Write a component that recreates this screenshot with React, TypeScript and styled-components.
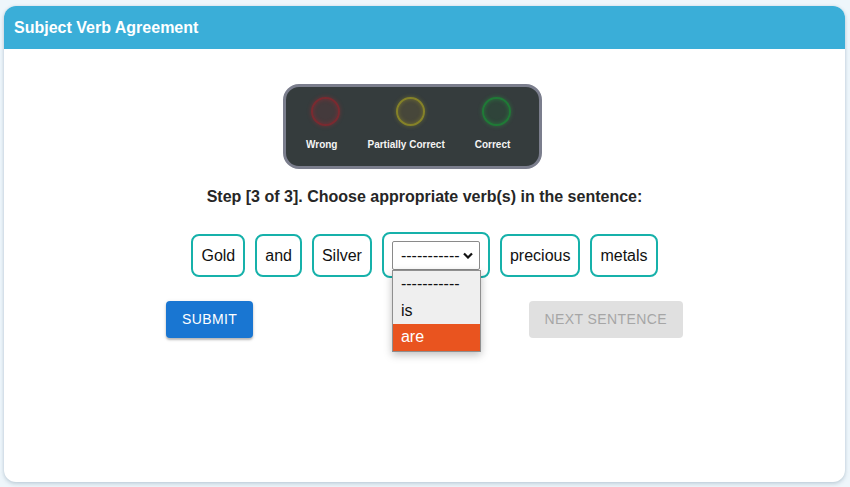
import React from "react";
import styled, { createGlobalStyle } from "styled-components";

const Global = createGlobalStyle`
  html, body { margin: 0; padding: 0; }
  body {
    background: #eef6fb;
    font-family: "Liberation Sans", Arial, sans-serif;
    width: 850px;
    height: 487px;
    overflow: hidden;
  }
  * { box-sizing: border-box; }
`;

const Page = styled.div`
  padding: 6px 5px 5px 4px;
  height: 487px;
`;

const Card = styled.div`
  background: #ffffff;
  border-radius: 12px;
  height: 476px;
  overflow: hidden;
  box-shadow: 0 2px 4px rgba(90, 120, 140, 0.28), 0 0 3px rgba(120, 150, 170, 0.18);
  display: flex;
  flex-direction: column;
`;

const Header = styled.div`
  height: 43px;
  background: #3aaed8;
  color: #fff;
  font-weight: 700;
  font-size: 16px;
  display: flex;
  align-items: center;
  padding-left: 10px;
`;

const Body = styled.div`
  display: flex;
  flex-direction: column;
  align-items: center;
`;

const Panel = styled.div`
  margin-top: 35px;
  margin-right: 24px;
  width: 259px;
  height: 85px;
  background: #353c3d;
  border: 3px solid #7b7e8d;
  border-radius: 16px;
  display: flex;
  gap: 30px;
  padding: 10px 0 0 20px;
`;

const Light = styled.div`
  display: flex;
  flex-direction: column;
  align-items: center;
`;

const Bulb = styled.div<{ $ring: string; $fill: string; $glow: string }>`
  width: 29px;
  height: 29px;
  border-radius: 50%;
  margin: 0 -4px 0 4px;
  border: 2px solid ${(p) => p.$ring};
  background: ${(p) => p.$fill};
  box-shadow: 0 0 4px ${(p) => p.$glow}, inset 0 0 4px ${(p) => p.$glow};
`;

const LightLabel = styled.div`
  margin-top: 13px;
  color: #f4f4f4;
  font-size: 10px;
  font-weight: 700;
  white-space: nowrap;
`;

const StepText = styled.div`
  margin-top: 18px;
  font-size: 16px;
  line-height: 20px;
  font-weight: 700;
  color: #262626;
`;

const WordRow = styled.div`
  margin-top: 25px;
  display: flex;
  align-items: center;
  gap: 10px;
`;

const Word = styled.div`
  border: 2px solid #16b1aa;
  border-radius: 8px;
  padding: 10px 8px;
  font-size: 16px;
  line-height: 19px;
  color: #111;
`;

const SelectWrap = styled.div`
  position: relative;
  border: 2px solid #16b1aa;
  border-radius: 8px;
  padding: 7px 8px 6px;
`;

const SelectBox = styled.div`
  width: 88px;
  height: 29px;
  border: 1px solid #8a8a8a;
  border-radius: 2px;
  background: #fff;
  display: flex;
  align-items: center;
  justify-content: space-between;
  padding: 0 6px 0 8px;
  font-size: 16px;
  color: #111;
`;

const Menu = styled.div`
  position: absolute;
  left: 8px;
  top: 36px;
  width: 89px;
  background: #efefef;
  border: 1px solid #8f8f8f;
  box-shadow: 0 3px 8px rgba(0, 0, 0, 0.25);
  z-index: 2;
`;

const Option = styled.div<{ $active?: boolean }>`
  height: 26.6px;
  line-height: 26px;
  padding-left: 8px;
  font-size: 16px;
  background: ${(p) => (p.$active ? "#e9541f" : "transparent")};
  color: ${(p) => (p.$active ? "#fff" : "#111")};
`;

const ButtonRow = styled.div`
  margin-top: 23px;
  width: 517px;
  display: flex;
  justify-content: space-between;
`;

const Button = styled.button<{ $disabled?: boolean }>`
  height: 37px;
  border: none;
  border-radius: 4px;
  padding: 0 16px 1px;
  font-family: "Liberation Sans", Arial, sans-serif;
  font-size: 14px;
  letter-spacing: 0.4px;
  background: ${(p) => (p.$disabled ? "#e0e0e0" : "#1976d2")};
  color: ${(p) => (p.$disabled ? "#a6a6a6" : "#fff")};
  box-shadow: ${(p) =>
    p.$disabled ? "none" : "0 2px 2px rgba(0,0,0,0.22), 0 1px 4px rgba(0,0,0,0.12)"};
`;

const lights = [
  { label: "Wrong", ring: "#7a2a30", fill: "#443a3c", glow: "rgba(190,40,50,0.4)" },
  { label: "Partially Correct", ring: "#858228", fill: "#47473a", glow: "rgba(190,180,40,0.35)" },
  { label: "Correct", ring: "#1f7a36", fill: "#2f443a", glow: "rgba(40,180,70,0.4)" },
];

export default function App() {
  return (
    <>
      <Global />
      <Page>
        <Card>
          <Header>Subject Verb Agreement</Header>
          <Body>
            <Panel>
              {lights.map((l) => (
                <Light key={l.label}>
                  <Bulb $ring={l.ring} $fill={l.fill} $glow={l.glow} />
                  <LightLabel>{l.label}</LightLabel>
                </Light>
              ))}
            </Panel>
            <StepText>Step [3 of 3]. Choose appropriate verb(s) in the sentence:</StepText>
            <WordRow>
              <Word>Gold</Word>
              <Word>and</Word>
              <Word>Silver</Word>
              <SelectWrap>
                <SelectBox>
                  <span>-----------</span>
                  <svg width="10" height="7" viewBox="0 0 10 7">
                    <polyline points="1,1.5 5,5.5 9,1.5" fill="none" stroke="#111" strokeWidth="2.2" />
                  </svg>
                </SelectBox>
                <Menu>
                  <Option>-----------</Option>
                  <Option>is</Option>
                  <Option $active>are</Option>
                </Menu>
              </SelectWrap>
              <Word>precious</Word>
              <Word>metals</Word>
            </WordRow>
            <ButtonRow>
              <Button>SUBMIT</Button>
              <Button $disabled>NEXT SENTENCE</Button>
            </ButtonRow>
          </Body>
        </Card>
      </Page>
    </>
  );
}
